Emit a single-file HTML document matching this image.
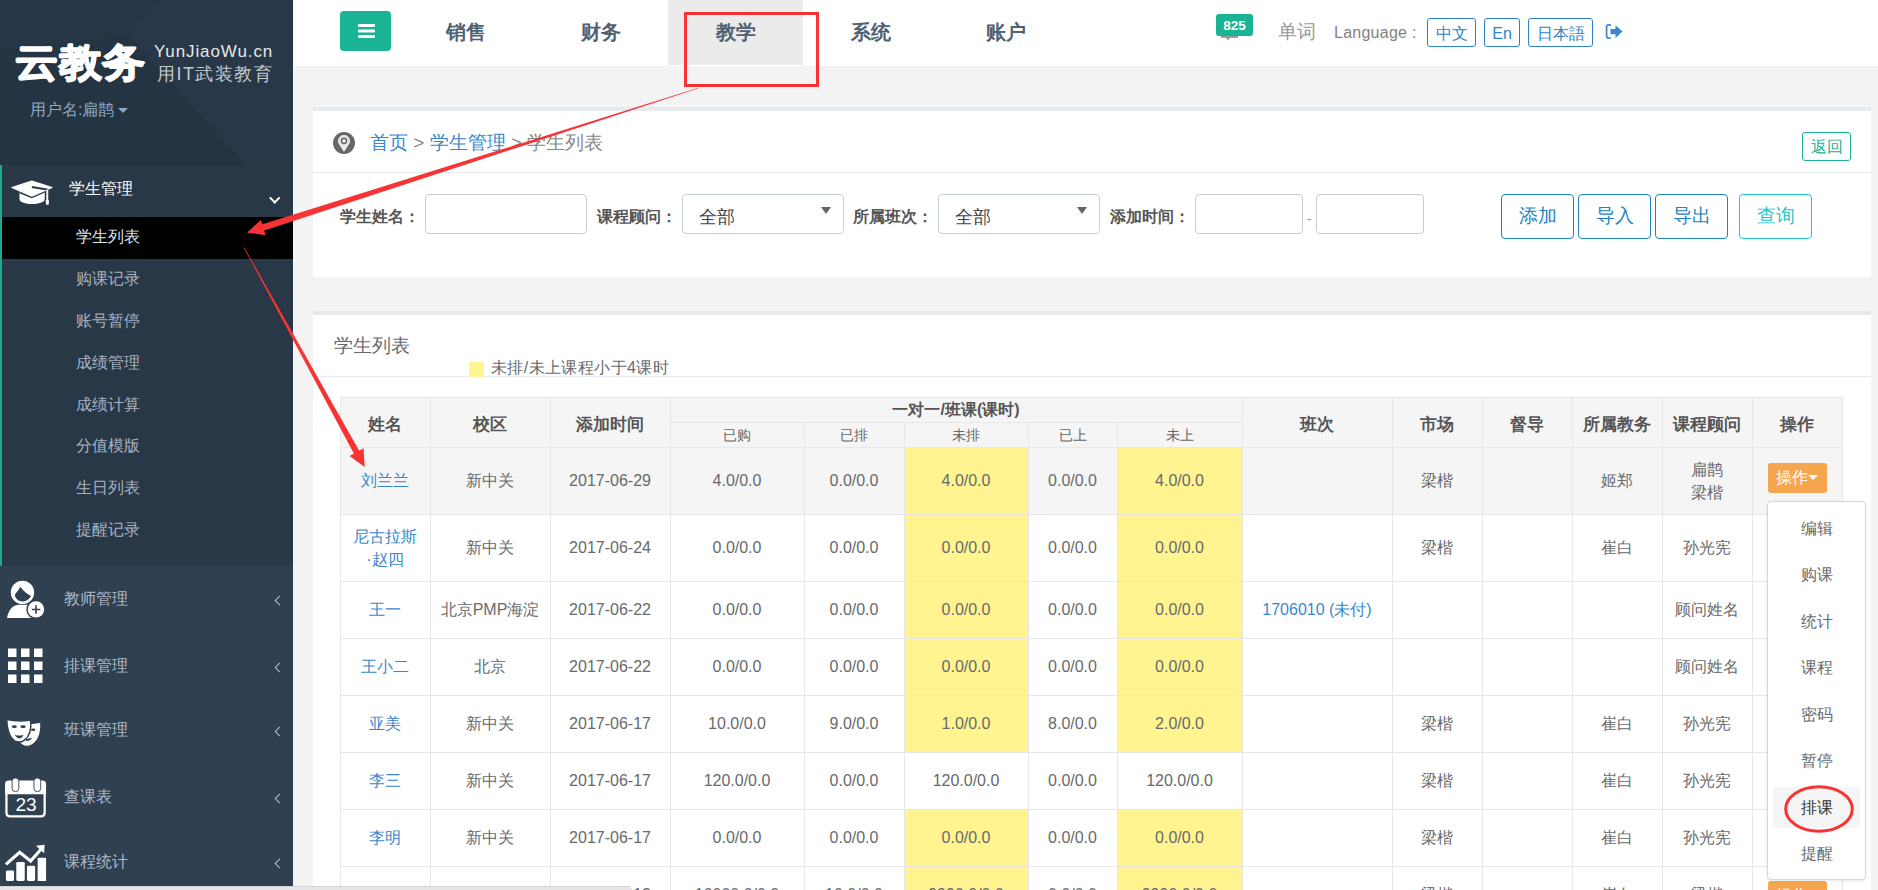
<!DOCTYPE html>
<html><head><meta charset="utf-8">
<style>
*{margin:0;padding:0;box-sizing:border-box;}
html,body{width:1878px;height:890px;overflow:hidden;background:#f3f3f4;font-family:"Liberation Sans",sans-serif;color:#676a6c;}
.abs{position:absolute;}
#side{position:absolute;left:0;top:0;width:293px;height:890px;background:#2f4050;}
#sidehead{position:absolute;left:0;top:0;width:293px;height:165px;background:linear-gradient(135deg,#263443 0%,#2a3a4a 45%,#253444 46%,#263545 100%);}
#subnav{position:absolute;left:0;top:165px;width:293px;height:401px;background:#293846;border-left:2px solid #19aa8d;}
.sub{position:absolute;left:74px;font-size:16px;color:#a7b1c2;line-height:20px;}
.nav2{position:absolute;left:64px;font-size:16px;color:#aeb8c8;line-height:20px;margin-top:1px;}
.chev{position:absolute;left:276px;margin-top:1.5px;width:7px;height:7px;border-left:1.9px solid #b4bdcb;border-bottom:1.9px solid #b4bdcb;transform:rotate(45deg);}
#topnav{position:absolute;left:294px;top:0;width:1584px;height:66px;background:#fff;}
.tn{position:absolute;top:20px;margin-left:1px;font-size:20px;font-weight:bold;color:#4f6275;line-height:24px;}
.lang{top:18px;height:29px;border:1px solid #2d84c8;border-radius:3px;color:#2d84c8;font-size:16px;line-height:30px;text-align:center;}
.flab{position:absolute;top:95.5px;font-size:16px;font-weight:bold;color:#555;line-height:20px;white-space:nowrap;}
.finp{position:absolute;top:83px;height:40px;border:1px solid #ccc;border-radius:4px;background:#fff;}
.selt{position:absolute;left:16px;top:11px;font-size:18px;color:#444;line-height:22px;}
.tri{position:absolute;right:12px;top:12px;width:0;height:0;border-left:5px solid transparent;border-right:5px solid transparent;border-top:7px solid #666;}
.fbtn{position:absolute;top:83px;width:73px;height:45px;border:1.5px solid #1c84c6;border-radius:4px;color:#1c84c6;font-size:19px;line-height:42px;text-align:center;}
.hl{position:absolute;left:340px;width:1503px;height:1px;background:#e7e7e7;}
.vl{position:absolute;width:1px;background:#e7e7e7;}
.th,.td{position:absolute;display:flex;align-items:center;justify-content:center;text-align:center;}
.th{font-size:16.5px;font-weight:bold;color:#555;line-height:20px;padding-top:4px;}
.th2,.sub2{padding-top:0;}
.th2{font-size:16px;}
.sub2{font-size:14px;font-weight:normal;color:#666;}
.td{font-size:16px;color:#676a6c;line-height:23px;}
.nm{color:#3a88cc;}
.obtn{position:absolute;left:1768px;width:59px;height:30px;background:#f6a64f;border-radius:3px;color:#fff;font-size:16px;line-height:30px;padding-left:8px;white-space:nowrap;}
.caret{display:inline-block;width:0;height:0;border-left:5px solid transparent;border-right:5px solid transparent;border-top:5px solid #fff;vertical-align:middle;margin-left:0px;margin-top:-2px;}
#dd{position:absolute;left:1767px;top:501px;width:99px;height:379px;background:#fff;border:1px solid #d3d6dc;border-radius:4px;box-shadow:0 1px 3px rgba(0,0,0,.1);}
.ddi{position:absolute;left:0px;width:97px;text-align:center;font-size:16px;color:#676a6c;line-height:20px;}
.panel{position:absolute;left:313px;width:1558px;background:#fff;border-top:4px solid #e7eaec;}
</style></head>
<body>
<div id="side">
  <div id="sidehead">
    <svg class="abs" style="left:0;top:0" width="293" height="165" viewBox="0 0 293 165">
      <rect width="293" height="165" fill="#263545"/>
      <polygon points="0,0 156,0 129,36 0,50" fill="#273646"/>
      <polygon points="156,0 293,0 293,165 246,165 129,36" fill="#283848"/>
      <polygon points="0,50 129,36 246,165 0,165" fill="#253443"/>
    </svg>
    <div class="abs" style="left:15px;top:36px;font-size:43px;font-weight:bold;color:#fff;line-height:50px;letter-spacing:0.5px;text-shadow:0.7px 0 0 #fff,-0.7px 0 0 #fff,0 0.7px 0 #fff,0 -0.7px 0 #fff;transform:scaleY(0.9);transform-origin:0 80%;">云教务</div>
    <div class="abs" style="left:154px;top:42px;font-size:17px;color:#e6e6e6;line-height:20px;letter-spacing:0.9px;">YunJiaoWu.cn</div>
    <div class="abs" style="left:157px;top:63px;font-size:18px;font-weight:300;color:#c6c9cc;line-height:22px;letter-spacing:1.5px;">用IT武装教育</div>
    <div class="abs" style="left:30px;top:100px;font-size:16px;color:#8fa7c0;line-height:20px;">用户名:扁鹊</div>
    <div class="abs" style="left:118px;top:108px;width:0;height:0;border-left:5px solid transparent;border-right:5px solid transparent;border-top:5px solid #8fa7c0;"></div>
  </div>
  <div id="subnav">
    <div class="abs" style="left:0px;top:52px;width:291px;height:42px;background:#000;"></div>
    <svg class="abs" style="left:4px;top:2px" width="50" height="50" viewBox="0 0 890 890">
      <path d="M240,450 L240,570 C240,690 690,690 690,570 L690,430 L460,530 Z" fill="#fff"/>
      <path d="M105,365 L460,250 L820,365 L460,520 Z" fill="#fff" stroke="#fff" stroke-width="20" stroke-linejoin="round"/>
      <path d="M240,455 L460,545 L690,445" fill="none" stroke="#293846" stroke-width="22"/>
      <path d="M460,355 L735,400 L735,600" fill="none" stroke="#293846" stroke-width="34"/>
      <path d="M460,355 L735,400 L735,600" fill="none" stroke="#fff" stroke-width="0"/>
      <path d="M735,400 L735,600" stroke="#fff" stroke-width="34"/>
      <path d="M705,590 L765,590 L760,670 L715,670 Z" fill="#fff"/>
    </svg>
    <div class="abs" style="left:67px;top:14px;font-size:16px;color:#fff;line-height:20px;">学生管理</div>
    <div class="abs" style="left:269px;top:28.5px;width:7.5px;height:7.5px;border-right:2.2px solid #fff;border-bottom:2.2px solid #fff;transform:rotate(45deg);"></div>
    <div class="sub" style="top:62px;color:#dfe4ea;">学生列表</div>
    <div class="sub" style="top:104px;">购课记录</div>
    <div class="sub" style="top:146px;">账号暂停</div>
    <div class="sub" style="top:188px;">成绩管理</div>
    <div class="sub" style="top:230px;">成绩计算</div>
    <div class="sub" style="top:271px;">分值模版</div>
    <div class="sub" style="top:313px;">生日列表</div>
    <div class="sub" style="top:355px;">提醒记录</div>
  </div>
  <svg class="abs" style="left:0;top:575px" width="50" height="50" viewBox="0 0 890 890">
    <circle cx="400" cy="310" r="208" fill="#fff"/>
    <path d="M265,350 C300,300 340,260 360,210 C420,290 480,340 550,370 C530,430 470,470 405,470 C330,470 270,420 265,350 Z" fill="#2f4050"/>
    <path d="M125,765 C150,620 230,530 340,530 L500,530 L560,765 Z" fill="#fff"/>
    <circle cx="640" cy="612" r="172" fill="#2f4050"/>
    <circle cx="640" cy="612" r="145" fill="#fff"/>
    <path d="M640,540 V690 M568,614 H718" stroke="#2f4050" stroke-width="28"/>
  </svg>
  <svg class="abs" style="left:8px;top:648px" width="36" height="36" viewBox="0 0 36 36">
    <g fill="#fff"><rect x="0" y="0.5" width="8.5" height="8.5"/><rect x="13" y="0.5" width="8.5" height="8.5"/><rect x="26" y="0.5" width="8.5" height="8.5"/>
    <rect x="0" y="13.5" width="8.5" height="8.5"/><rect x="13" y="13.5" width="8.5" height="8.5"/><rect x="26" y="13.5" width="8.5" height="8.5"/>
    <rect x="0" y="26.5" width="8.5" height="8.5"/><rect x="13" y="26.5" width="8.5" height="8.5"/><rect x="26" y="26.5" width="8.5" height="8.5"/></g>
  </svg>
  <svg class="abs" style="left:0;top:710px" width="50" height="50" viewBox="0 0 890 890">
    <path d="M380,250 Q550,255 715,230 C725,420 670,580 520,632 C440,650 380,610 350,570 Z" fill="#fff"/>
    <ellipse cx="590" cy="350" rx="38" ry="22" fill="#2f4050"/>
    <path d="M440,525 Q510,505 575,500 Q545,548 490,550 Q455,548 440,525 Z" fill="#2f4050"/>
    <path d="M120,170 Q330,215 545,180 C560,330 530,470 430,540 C380,575 320,580 260,550 C170,490 120,330 120,170 Z" fill="#fff" stroke="#2f4050" stroke-width="26"/>
    <ellipse cx="255" cy="297" rx="45" ry="24" fill="#2f4050"/>
    <ellipse cx="410" cy="297" rx="48" ry="24" fill="#2f4050"/>
    <path d="M265,440 Q340,470 420,440 Q392,505 342,505 Q290,500 265,440 Z" fill="#2f4050"/>
  </svg>
  <svg class="abs" style="left:0;top:772px" width="50" height="50" viewBox="0 0 890 890">
    <path d="M115,390 V720 Q115,788 185,788 H725 Q795,788 795,720 V390" fill="none" stroke="#fff" stroke-width="40"/>
    <path d="M90,395 V215 Q90,150 155,150 H755 Q820,150 820,215 V395 Z" fill="#fff"/>
    <rect x="215" y="105" width="120" height="245" rx="60" fill="#fff" stroke="#2f4050" stroke-width="16"/>
    <rect x="605" y="105" width="120" height="245" rx="60" fill="#fff" stroke="#2f4050" stroke-width="16"/>
    <text x="465" y="700" text-anchor="middle" font-family="Liberation Sans" font-size="340" fill="#fff">23</text>
  </svg>
  <svg class="abs" style="left:0;top:838px" width="50" height="50" viewBox="0 0 890 890">
    <polyline points="105,470 350,255 545,410 730,200" fill="none" stroke="#fff" stroke-width="55" stroke-linejoin="miter"/>
    <polygon points="795,120 640,140 785,270" fill="#fff"/>
    <rect x="105" y="580" width="145" height="185" rx="25" fill="#fff"/>
    <rect x="290" y="425" width="150" height="340" rx="25" fill="#fff"/>
    <rect x="480" y="495" width="145" height="270" rx="25" fill="#fff"/>
    <rect x="670" y="350" width="150" height="415" rx="15" fill="#fff"/>
  </svg>
  <div class="nav2" style="top:588px;">教师管理</div>
  <div class="chev" style="top:595px;"></div>
  <div class="nav2" style="top:655px;">排课管理</div>
  <div class="chev" style="top:662px;"></div>
  <div class="nav2" style="top:719px;">班课管理</div>
  <div class="chev" style="top:726px;"></div>
  <div class="nav2" style="top:786px;">查课表</div>
  <div class="chev" style="top:793px;"></div>
  <div class="nav2" style="top:851px;">课程统计</div>
  <div class="chev" style="top:858px;"></div>
</div>
<div id="topnav">
  <div class="abs" style="left:46px;top:11px;width:51px;height:40px;background:#1ab394;border-radius:4px;"></div>
  <div class="abs" style="left:63.5px;top:24px;width:17px;height:3px;background:#fff;border-radius:1px;box-shadow:0 5.6px 0 #fff,0 10.9px 0 #fff;"></div>
  <div class="abs" style="left:374px;top:0;width:135px;height:65px;background:#ebebeb;"></div>
  <div class="tn" style="left:151px;">销售</div>
  <div class="tn" style="left:286px;">财务</div>
  <div class="tn" style="left:421px;">教学</div>
  <div class="tn" style="left:556px;">系统</div>
  <div class="tn" style="left:691px;">账户</div>
  <svg class="abs" style="left:920px;top:12px" width="40" height="30" viewBox="0 0 40 30">
    <rect x="7" y="23.3" width="17" height="2.6" fill="#999"/><path d="M11.5 25 L16.5 25 L14 28.5 Z" fill="#999"/>
    <rect x="2" y="2" width="37" height="22" rx="3" fill="#1ab394"/>
    <text x="20.5" y="17.6" text-anchor="middle" font-family="Liberation Sans" font-weight="bold" font-size="13.5" fill="#fff">825</text>
  </svg>
  <div class="abs" style="left:984px;top:21px;font-size:19px;color:#999;line-height:22px;">单词</div>
  <div class="abs" style="left:1040px;top:23px;font-size:16px;color:#828282;line-height:20px;letter-spacing:0.25px;">Language :</div>
  <div class="abs lang" style="left:1133px;width:49px;">中文</div>
  <div class="abs lang" style="left:1190px;width:36px;">En</div>
  <div class="abs lang" style="left:1234px;width:65px;">日本語</div>
  <svg class="abs" style="left:1311px;top:23px" width="20" height="17" viewBox="0 0 20 17">
    <path d="M6 1.8 H3.5 C2.3 1.8 1.6 2.6 1.6 3.8 V13 C1.6 14.2 2.3 15 3.5 15 H6" stroke="#3a88cc" stroke-width="1.7" fill="none"/>
    <path d="M5.5 6 H10.5 V2.2 L17.5 8.6 L10.5 15 V11.2 H5.5 Z" fill="#3a88cc"/>
  </svg>
</div>
<div class="panel" style="top:107px;height:170px;">
  <svg class="abs" style="left:20px;top:21px" width="22" height="22" viewBox="0 0 22 22">
    <circle cx="11" cy="11" r="11" fill="#676767"/>
    <path d="M11 20 L6.2 12.5 C5.3 11.2 5 10.2 5 9 C5 5.7 7.7 3 11 3 C14.3 3 17 5.7 17 9 C17 10.2 16.7 11.2 15.8 12.5 Z" fill="#e9e9e9"/>
    <circle cx="11" cy="8.8" r="2.6" fill="none" stroke="#676767" stroke-width="1.5"/>
  </svg>
  <div class="abs" style="left:57px;top:21px;font-size:19px;line-height:22px;color:#888;white-space:nowrap;"><span style="color:#3a88cc">首页</span> &gt; <span style="color:#3a88cc">学生管理</span> &gt; 学生列表</div>
  <div class="abs" style="left:1489px;top:21px;width:49px;height:29px;border:1px solid #1ab394;border-radius:3px;color:#1ab394;font-size:16px;line-height:27px;text-align:center;">返回</div>
  <div class="abs" style="left:0;top:61px;width:1558px;height:1px;background:#e7eaec;"></div>
  <div class="flab" style="left:27px;">学生姓名：</div>
  <div class="finp" style="left:112px;width:162px;"></div>
  <div class="flab" style="left:284px;">课程顾问：</div>
  <div class="finp" style="left:369px;width:162px;border-color:#c8d0da;"><span class="selt">全部</span><span class="tri"></span></div>
  <div class="flab" style="left:540px;">所属班次：</div>
  <div class="finp" style="left:625px;width:162px;border-color:#c8d0da;"><span class="selt">全部</span><span class="tri"></span></div>
  <div class="flab" style="left:797px;">添加时间：</div>
  <div class="finp" style="left:882px;width:108px;"></div>
  <div class="abs" style="left:994px;top:100px;font-size:14px;color:#999;">-</div>
  <div class="finp" style="left:1003px;width:108px;"></div>
  <div class="fbtn" style="left:1188px;">添加</div>
  <div class="fbtn" style="left:1265px;">导入</div>
  <div class="fbtn" style="left:1342px;">导出</div>
  <div class="fbtn" style="left:1426px;border-color:#23c6c8;color:#23c6c8;">查询</div>
</div>
<div class="panel" style="top:311px;height:600px;">
  <div class="abs" style="left:21px;top:19.5px;font-size:19px;color:#676a6c;line-height:22px;">学生列表</div>
  <div class="abs" style="left:0;top:61px;width:1558px;height:1px;background:#e7eaec;"></div>
  <div class="abs" style="left:156px;top:47px;width:15px;height:15px;background:#fff48f;"></div>
  <div class="abs" style="left:178px;top:42.5px;font-size:16px;color:#676a6c;line-height:20px;white-space:nowrap;letter-spacing:0.4px;">未排/未上课程小于4课时</div>
</div>
<div id="tbl">
<div class="abs" style="left:340px;top:397px;width:1502px;height:117px;background:#f5f5f5;"></div>
<div class="abs" style="left:904px;top:447px;width:124px;height:67px;background:#fff48f;"></div>
<div class="abs" style="left:1117px;top:447px;width:125px;height:67px;background:#fff48f;"></div>
<div class="abs" style="left:904px;top:514px;width:124px;height:67px;background:#fff48f;"></div>
<div class="abs" style="left:1117px;top:514px;width:125px;height:67px;background:#fff48f;"></div>
<div class="abs" style="left:904px;top:581px;width:124px;height:57px;background:#fff48f;"></div>
<div class="abs" style="left:1117px;top:581px;width:125px;height:57px;background:#fff48f;"></div>
<div class="abs" style="left:904px;top:638px;width:124px;height:57px;background:#fff48f;"></div>
<div class="abs" style="left:1117px;top:638px;width:125px;height:57px;background:#fff48f;"></div>
<div class="abs" style="left:904px;top:695px;width:124px;height:57px;background:#fff48f;"></div>
<div class="abs" style="left:1117px;top:695px;width:125px;height:57px;background:#fff48f;"></div>
<div class="abs" style="left:904px;top:809px;width:124px;height:57px;background:#fff48f;"></div>
<div class="abs" style="left:1117px;top:809px;width:125px;height:57px;background:#fff48f;"></div>
<div class="abs" style="left:904px;top:866px;width:124px;height:57px;background:#fff48f;"></div>
<div class="abs" style="left:1117px;top:866px;width:125px;height:57px;background:#fff48f;"></div>
<div class="hl" style="top:397px;"></div>
<div class="hl" style="top:447px;"></div>
<div class="hl" style="top:514px;"></div>
<div class="hl" style="top:581px;"></div>
<div class="hl" style="top:638px;"></div>
<div class="hl" style="top:695px;"></div>
<div class="hl" style="top:752px;"></div>
<div class="hl" style="top:809px;"></div>
<div class="hl" style="top:866px;"></div>
<div class="hl" style="top:923px;"></div>
<div class="abs" style="left:670px;top:422px;width:572px;height:1px;background:#e7e7e7;"></div>
<div class="vl" style="left:340px;top:397px;height:493px;"></div>
<div class="vl" style="left:430px;top:397px;height:493px;"></div>
<div class="vl" style="left:550px;top:397px;height:493px;"></div>
<div class="vl" style="left:670px;top:397px;height:493px;"></div>
<div class="vl" style="left:804px;top:422px;height:468px;"></div>
<div class="vl" style="left:904px;top:422px;height:468px;"></div>
<div class="vl" style="left:1028px;top:422px;height:468px;"></div>
<div class="vl" style="left:1117px;top:422px;height:468px;"></div>
<div class="vl" style="left:1242px;top:397px;height:493px;"></div>
<div class="vl" style="left:1392px;top:397px;height:493px;"></div>
<div class="vl" style="left:1482px;top:397px;height:493px;"></div>
<div class="vl" style="left:1572px;top:397px;height:493px;"></div>
<div class="vl" style="left:1662px;top:397px;height:493px;"></div>
<div class="vl" style="left:1752px;top:397px;height:493px;"></div>
<div class="vl" style="left:1842px;top:397px;height:493px;"></div>
<div class="th" style="left:340px;top:397px;width:90px;height:50px;"><span>姓名</span></div>
<div class="th" style="left:430px;top:397px;width:120px;height:50px;"><span>校区</span></div>
<div class="th" style="left:550px;top:397px;width:120px;height:50px;"><span>添加时间</span></div>
<div class="th" style="left:1242px;top:397px;width:150px;height:50px;"><span>班次</span></div>
<div class="th" style="left:1392px;top:397px;width:90px;height:50px;"><span>市场</span></div>
<div class="th" style="left:1482px;top:397px;width:90px;height:50px;"><span>督导</span></div>
<div class="th" style="left:1572px;top:397px;width:90px;height:50px;"><span>所属教务</span></div>
<div class="th" style="left:1662px;top:397px;width:90px;height:50px;"><span>课程顾问</span></div>
<div class="th" style="left:1752px;top:397px;width:90px;height:50px;"><span>操作</span></div>
<div class="th th2" style="left:670px;top:397px;width:572px;height:25px;"><span>一对一/班课(课时)</span></div>
<div class="th sub2" style="left:670px;top:422px;width:134px;height:25px;"><span>已购</span></div>
<div class="th sub2" style="left:804px;top:422px;width:100px;height:25px;"><span>已排</span></div>
<div class="th sub2" style="left:904px;top:422px;width:124px;height:25px;"><span>未排</span></div>
<div class="th sub2" style="left:1028px;top:422px;width:89px;height:25px;"><span>已上</span></div>
<div class="th sub2" style="left:1117px;top:422px;width:125px;height:25px;"><span>未上</span></div>
<div class="td nm" style="left:340px;top:447px;width:90px;height:67px;"><span>刘兰兰</span></div>
<div class="td" style="left:430px;top:447px;width:120px;height:67px;"><span>新中关</span></div>
<div class="td" style="left:550px;top:447px;width:120px;height:67px;"><span>2017-06-29</span></div>
<div class="td" style="left:670px;top:447px;width:134px;height:67px;"><span>4.0/0.0</span></div>
<div class="td" style="left:804px;top:447px;width:100px;height:67px;"><span>0.0/0.0</span></div>
<div class="td" style="left:904px;top:447px;width:124px;height:67px;"><span>4.0/0.0</span></div>
<div class="td" style="left:1028px;top:447px;width:89px;height:67px;"><span>0.0/0.0</span></div>
<div class="td" style="left:1117px;top:447px;width:125px;height:67px;"><span>4.0/0.0</span></div>
<div class="td" style="left:1392px;top:447px;width:90px;height:67px;"><span>梁楷</span></div>
<div class="td" style="left:1572px;top:447px;width:90px;height:67px;"><span>姬郑</span></div>
<div class="td" style="left:1662px;top:447px;width:90px;height:67px;"><span>扁鹊<br>梁楷</span></div>
<div class="td nm" style="left:340px;top:514px;width:90px;height:67px;"><span>尼古拉斯<br>·赵四</span></div>
<div class="td" style="left:430px;top:514px;width:120px;height:67px;"><span>新中关</span></div>
<div class="td" style="left:550px;top:514px;width:120px;height:67px;"><span>2017-06-24</span></div>
<div class="td" style="left:670px;top:514px;width:134px;height:67px;"><span>0.0/0.0</span></div>
<div class="td" style="left:804px;top:514px;width:100px;height:67px;"><span>0.0/0.0</span></div>
<div class="td" style="left:904px;top:514px;width:124px;height:67px;"><span>0.0/0.0</span></div>
<div class="td" style="left:1028px;top:514px;width:89px;height:67px;"><span>0.0/0.0</span></div>
<div class="td" style="left:1117px;top:514px;width:125px;height:67px;"><span>0.0/0.0</span></div>
<div class="td" style="left:1392px;top:514px;width:90px;height:67px;"><span>梁楷</span></div>
<div class="td" style="left:1572px;top:514px;width:90px;height:67px;"><span>崔白</span></div>
<div class="td" style="left:1662px;top:514px;width:90px;height:67px;"><span>孙光宪</span></div>
<div class="td nm" style="left:340px;top:581px;width:90px;height:57px;"><span>王一</span></div>
<div class="td" style="left:430px;top:581px;width:120px;height:57px;"><span>北京PMP海淀</span></div>
<div class="td" style="left:550px;top:581px;width:120px;height:57px;"><span>2017-06-22</span></div>
<div class="td" style="left:670px;top:581px;width:134px;height:57px;"><span>0.0/0.0</span></div>
<div class="td" style="left:804px;top:581px;width:100px;height:57px;"><span>0.0/0.0</span></div>
<div class="td" style="left:904px;top:581px;width:124px;height:57px;"><span>0.0/0.0</span></div>
<div class="td" style="left:1028px;top:581px;width:89px;height:57px;"><span>0.0/0.0</span></div>
<div class="td" style="left:1117px;top:581px;width:125px;height:57px;"><span>0.0/0.0</span></div>
<div class="td nm" style="left:1242px;top:581px;width:150px;height:57px;"><span>1706010 (未付)</span></div>
<div class="td" style="left:1662px;top:581px;width:90px;height:57px;"><span>顾问姓名</span></div>
<div class="td nm" style="left:340px;top:638px;width:90px;height:57px;"><span>王小二</span></div>
<div class="td" style="left:430px;top:638px;width:120px;height:57px;"><span>北京</span></div>
<div class="td" style="left:550px;top:638px;width:120px;height:57px;"><span>2017-06-22</span></div>
<div class="td" style="left:670px;top:638px;width:134px;height:57px;"><span>0.0/0.0</span></div>
<div class="td" style="left:804px;top:638px;width:100px;height:57px;"><span>0.0/0.0</span></div>
<div class="td" style="left:904px;top:638px;width:124px;height:57px;"><span>0.0/0.0</span></div>
<div class="td" style="left:1028px;top:638px;width:89px;height:57px;"><span>0.0/0.0</span></div>
<div class="td" style="left:1117px;top:638px;width:125px;height:57px;"><span>0.0/0.0</span></div>
<div class="td" style="left:1662px;top:638px;width:90px;height:57px;"><span>顾问姓名</span></div>
<div class="td nm" style="left:340px;top:695px;width:90px;height:57px;"><span>亚美</span></div>
<div class="td" style="left:430px;top:695px;width:120px;height:57px;"><span>新中关</span></div>
<div class="td" style="left:550px;top:695px;width:120px;height:57px;"><span>2017-06-17</span></div>
<div class="td" style="left:670px;top:695px;width:134px;height:57px;"><span>10.0/0.0</span></div>
<div class="td" style="left:804px;top:695px;width:100px;height:57px;"><span>9.0/0.0</span></div>
<div class="td" style="left:904px;top:695px;width:124px;height:57px;"><span>1.0/0.0</span></div>
<div class="td" style="left:1028px;top:695px;width:89px;height:57px;"><span>8.0/0.0</span></div>
<div class="td" style="left:1117px;top:695px;width:125px;height:57px;"><span>2.0/0.0</span></div>
<div class="td" style="left:1392px;top:695px;width:90px;height:57px;"><span>梁楷</span></div>
<div class="td" style="left:1572px;top:695px;width:90px;height:57px;"><span>崔白</span></div>
<div class="td" style="left:1662px;top:695px;width:90px;height:57px;"><span>孙光宪</span></div>
<div class="td nm" style="left:340px;top:752px;width:90px;height:57px;"><span>李三</span></div>
<div class="td" style="left:430px;top:752px;width:120px;height:57px;"><span>新中关</span></div>
<div class="td" style="left:550px;top:752px;width:120px;height:57px;"><span>2017-06-17</span></div>
<div class="td" style="left:670px;top:752px;width:134px;height:57px;"><span>120.0/0.0</span></div>
<div class="td" style="left:804px;top:752px;width:100px;height:57px;"><span>0.0/0.0</span></div>
<div class="td" style="left:904px;top:752px;width:124px;height:57px;"><span>120.0/0.0</span></div>
<div class="td" style="left:1028px;top:752px;width:89px;height:57px;"><span>0.0/0.0</span></div>
<div class="td" style="left:1117px;top:752px;width:125px;height:57px;"><span>120.0/0.0</span></div>
<div class="td" style="left:1392px;top:752px;width:90px;height:57px;"><span>梁楷</span></div>
<div class="td" style="left:1572px;top:752px;width:90px;height:57px;"><span>崔白</span></div>
<div class="td" style="left:1662px;top:752px;width:90px;height:57px;"><span>孙光宪</span></div>
<div class="td nm" style="left:340px;top:809px;width:90px;height:57px;"><span>李明</span></div>
<div class="td" style="left:430px;top:809px;width:120px;height:57px;"><span>新中关</span></div>
<div class="td" style="left:550px;top:809px;width:120px;height:57px;"><span>2017-06-17</span></div>
<div class="td" style="left:670px;top:809px;width:134px;height:57px;"><span>0.0/0.0</span></div>
<div class="td" style="left:804px;top:809px;width:100px;height:57px;"><span>0.0/0.0</span></div>
<div class="td" style="left:904px;top:809px;width:124px;height:57px;"><span>0.0/0.0</span></div>
<div class="td" style="left:1028px;top:809px;width:89px;height:57px;"><span>0.0/0.0</span></div>
<div class="td" style="left:1117px;top:809px;width:125px;height:57px;"><span>0.0/0.0</span></div>
<div class="td" style="left:1392px;top:809px;width:90px;height:57px;"><span>梁楷</span></div>
<div class="td" style="left:1572px;top:809px;width:90px;height:57px;"><span>崔白</span></div>
<div class="td" style="left:1662px;top:809px;width:90px;height:57px;"><span>孙光宪</span></div>
<div class="td" style="left:550px;top:866px;width:120px;height:57px;"><span>2017-06-12</span></div>
<div class="td" style="left:670px;top:866px;width:134px;height:57px;"><span>10000.0/0.0</span></div>
<div class="td" style="left:804px;top:866px;width:100px;height:57px;"><span>10.0/0.0</span></div>
<div class="td" style="left:904px;top:866px;width:124px;height:57px;"><span>9990.0/0.0</span></div>
<div class="td" style="left:1028px;top:866px;width:89px;height:57px;"><span>0.0/0.0</span></div>
<div class="td" style="left:1117px;top:866px;width:125px;height:57px;"><span>9990.0/0.0</span></div>
<div class="td" style="left:1392px;top:866px;width:90px;height:57px;"><span>梁楷</span></div>
<div class="td" style="left:1572px;top:866px;width:90px;height:57px;"><span>崔白</span></div>
<div class="td" style="left:1662px;top:866px;width:90px;height:57px;"><span>梁楷</span></div>
</div>
<div class="obtn" style="top:463px;">操作<span class="caret"></span></div>
<div class="obtn" style="top:881px;">操作<span class="caret"></span></div>
<div id="dd">
  <div class="abs" style="left:5px;top:285px;width:87px;height:41px;background:#f5f5f5;border-radius:3px;"></div>
  <div class="ddi" style="top:17px;">编辑</div>
  <div class="ddi" style="top:63px;">购课</div>
  <div class="ddi" style="top:110px;">统计</div>
  <div class="ddi" style="top:156px;">课程</div>
  <div class="ddi" style="top:203px;">密码</div>
  <div class="ddi" style="top:249px;">暂停</div>
  <div class="ddi" style="top:296px;color:#333;">排课</div>
  <div class="ddi" style="top:342px;">提醒</div>
</div>
<div class="abs" style="left:0;top:886px;width:632px;height:4px;background:#e6e6e6;border-top:1px solid #d4d4d4;border-radius:0 4px 0 0;"></div>
<svg class="abs" style="left:0;top:0;pointer-events:none" width="1878" height="890" viewBox="0 0 1878 890"><rect x="685.5" y="13.5" width="132" height="72" fill="none" stroke="#f73333" stroke-width="3"/><polygon points="698.41,87.71 259.34,225.33 261.32,231.52 698.59,88.29" fill="#f73333"/><polygon points="247.00,232.70 260.75,219.89 265.63,235.13" fill="#f73333"/><polygon points="243.74,247.64 355.33,456.18 360.58,453.29 244.26,247.36" fill="#f73333"/><polygon points="364.70,467.00 349.50,455.96 363.52,448.25" fill="#f73333"/><ellipse cx="1819" cy="809" rx="33.3" ry="22.2" fill="none" stroke="#f73333" stroke-width="3"/></svg>
</body></html>
